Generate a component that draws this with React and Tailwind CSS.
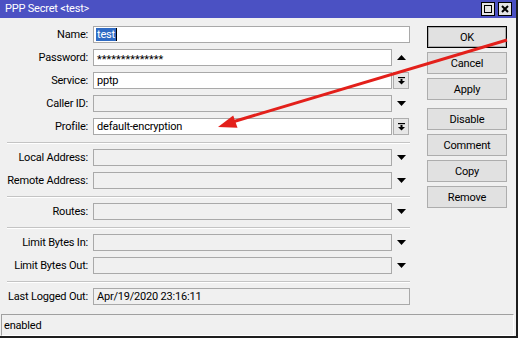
import React from "react";

function Down() {
  return (
    <svg width="9" height="5" viewBox="0 0 9 5"><polygon points="0,0 9,0 4.5,5" fill="#000" /></svg>
  );
}
function Up() {
  return (
    <svg width="9" height="5" viewBox="0 0 9 5"><polygon points="0,5 9,5 4.5,0" fill="#000" /></svg>
  );
}
function DropBtn() {
  return (
    <div className="ml-[1px] w-[16px] h-[17px] border border-[#adadad] bg-[#e6e6e6] flex items-center justify-center">
      <svg width="7" height="8" viewBox="0 0 7 8">
        <rect x="0" y="0" width="7" height="1.2" fill="#000" />
        <rect x="2.5" y="2" width="2" height="2" fill="#000" />
        <polygon points="0,4 7,4 3.5,7.5" fill="#000" />
      </svg>
    </div>
  );
}
function Slot({ children }) {
  return <div className="w-[18px] h-[17px] flex items-center justify-center">{children}</div>;
}

function Row({ label, children, className = "" }) {
  return (
    <div className={"flex items-center h-[17px] " + className}>
      <div className="w-[88px] text-right leading-none whitespace-nowrap">{label}</div>
      <div className="ml-[5px] flex items-center">{children}</div>
    </div>
  );
}

function Input({ w = "w-[299px]", white, children }) {
  return (
    <div
      className={
        "h-[17px] border border-[#a9a9a9] flex items-center pl-[3px] leading-none whitespace-nowrap " +
        w +
        (white ? " bg-white" : " bg-[#f0f0f0]")
      }
    >
      {children}
    </div>
  );
}

function Sep() {
  return <div className="ml-[7px] w-[403px] h-[2px] border-t border-[#c4c4c4] border-b border-b-white" />;
}

function Btn({ children, def, className = "" }) {
  return (
    <div
      className={
        "h-[22px] w-[80px] flex items-center justify-center leading-none bg-[#e1e1e1] " +
        (def ? "border border-black shadow-[inset_0_0_0_1px_#adadad]" : "border border-[#adadad]") +
        " " +
        className
      }
    >
      {children}
    </div>
  );
}

export default function App() {
  return (
    <div className="relative w-[530px] h-[344px] bg-white overflow-hidden text-[11px] tracking-[-0.2px] text-black font-['Roboto',sans-serif]">
      <div className="w-[518px] h-[338px] bg-[#f0f0f0] border-r-2 border-b-2 border-[#1e1e1e] flex flex-col">
        {/* title bar */}
        <div className="h-[18px] bg-[#4b51c3] flex items-start shrink-0">
          <div className="pl-[5px] pt-[3px] text-white leading-none text-[11px]">PPP Secret &lt;test&gt;</div>
          <div className="ml-auto mr-[4px] mt-[2px] flex gap-[3px]">
            <div className="w-[14px] h-[14px] bg-[#e4e4e4] border border-black flex items-center justify-center">
              <div className="w-[8px] h-[8px] border-[1.5px] border-black" />
            </div>
            <div className="w-[14px] h-[14px] bg-[#e4e4e4] border border-black flex items-center justify-center">
              <svg width="8" height="8" viewBox="0 0 8 8">
                <path d="M1 1 L7 7 M7 1 L1 7" stroke="#000" strokeWidth="2" />
              </svg>
            </div>
          </div>
        </div>

        {/* body */}
        <div className="flex flex-1">
          <div className="w-[410px] flex flex-col pt-[8px]">
            <div className="flex flex-col gap-[6px]">
              <Row label="Name:">
                <Input w="w-[317px]" white>
                  <span className="bg-[#2f6bc4] text-white px-[1px] -ml-[1px] h-[13px] flex items-center">test</span>
                  <span className="w-[1px] h-[13px] bg-black" />
                </Input>
              </Row>
              <Row label="Password:">
                <Input white>
                  <span className="pt-[3px] tracking-[0px]">**************</span>
                </Input>
                <Slot><Up /></Slot>
              </Row>
              <Row label="Service:">
                <Input white>pptp</Input>
                <DropBtn />
              </Row>
              <Row label="Caller ID:">
                <Input />
                <Slot><Down /></Slot>
              </Row>
              <Row label="Profile:">
                <Input white>default-encryption</Input>
                <DropBtn />
              </Row>
            </div>
            <div className="mt-[7px]"><Sep /></div>
            <div className="mt-[5px] flex flex-col gap-[6px]">
              <Row label="Local Address:">
                <Input />
                <Slot><Down /></Slot>
              </Row>
              <Row label="Remote Address:">
                <Input />
                <Slot><Down /></Slot>
              </Row>
            </div>
            <div className="mt-[7px]"><Sep /></div>
            <div className="mt-[5px]">
              <Row label="Routes:">
                <Input />
                <Slot><Down /></Slot>
              </Row>
            </div>
            <div className="mt-[7px]"><Sep /></div>
            <div className="mt-[5px] flex flex-col gap-[6px]">
              <Row label="Limit Bytes In:">
                <Input />
                <Slot><Down /></Slot>
              </Row>
              <Row label="Limit Bytes Out:">
                <Input />
                <Slot><Down /></Slot>
              </Row>
            </div>
            <div className="mt-[7px]"><Sep /></div>
            <div className="mt-[5px]">
              <Row label="Last Logged Out:">
                <Input w="w-[317px]">Apr/19/2020 23:16:11</Input>
              </Row>
            </div>
          </div>

          <div className="ml-[17px] pt-[8px] flex flex-col gap-[4px]">
            <Btn def>OK</Btn>
            <Btn>Cancel</Btn>
            <Btn>Apply</Btn>
            <Btn className="mt-[4px]">Disable</Btn>
            <Btn>Comment</Btn>
            <Btn>Copy</Btn>
            <Btn>Remove</Btn>
          </div>
        </div>

        {/* status bar */}
        <div className="h-[22px] ml-[1px] mr-[2px] border-t border-l border-[#a0a0a0] border-r border-b border-r-white border-b-white flex items-center pl-[2px] leading-none shrink-0">
          enabled
        </div>
      </div>

      <svg className="absolute left-0 top-0 pointer-events-none" width="530" height="344" viewBox="0 0 530 344">
        <line x1="507" y1="40" x2="234" y2="121.5" stroke="#e3201b" strokeWidth="3" />
        <polygon points="218,127 237.5,127.8 233.2,115.6" fill="#e3201b" />
      </svg>
    </div>
  );
}
